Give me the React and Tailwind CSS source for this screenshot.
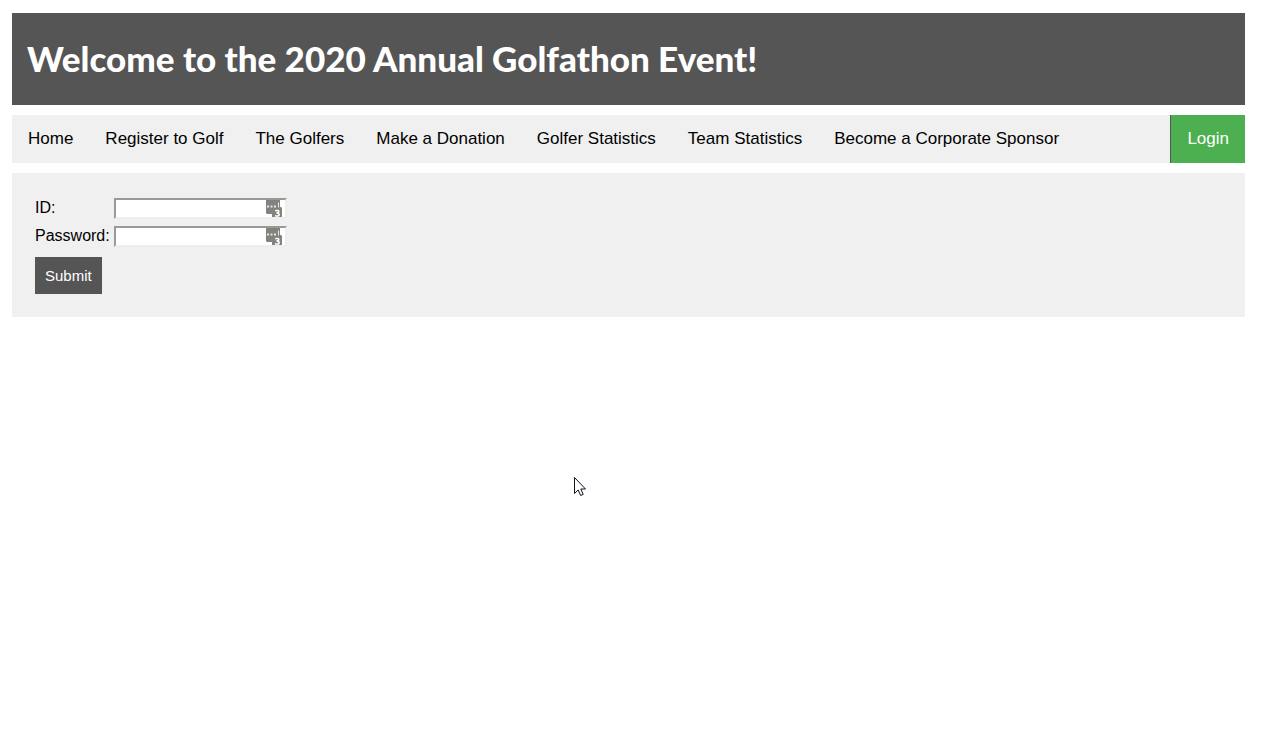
const links = [
  'Home',
  'Register to Golf',
  'The Golfers',
  'Make a Donation',
  'Golfer Statistics',
  'Team Statistics',
  'Become a Corporate Sponsor',
];

function KeyIcon() {
  return (
    <svg
      aria-hidden="true"
      viewBox="0 0 16 17"
      className="pointer-events-none absolute top-0.5 right-[5px] h-[17px] w-4"
    >
      <path d="M0 0H14V7H15L16 8V17H6V14H1L0 13Z" fill="#84827c" />
      <path
        d="M1 5.5h2v2H1zM4.5 5.5h2v2h-2zM8 5.5h2v2H8zM12 2.5h1v5H12z"
        fill="#e8e8e6"
      />
      <path
        d="M9.2 10.8Q12.8 9.8 12.8 11.6Q12.8 13 10.5 13.1Q13.2 13.2 13.2 14.8Q13 16.6 9 15.8"
        fill="none"
        stroke="#fff"
        strokeWidth="1.5"
      />
    </svg>
  );
}

function Field({ id, label, type }) {
  return (
    <>
      <label htmlFor={id} className="leading-5">
        {label}
      </label>
      <div className="relative w-[173px]">
        <input
          id={id}
          type={type}
          className="block h-[21px] w-full border-2 border-t-[#999999] border-r-[#eeeeee] border-b-[#eeeeee] border-l-[#999999] bg-white pr-5 pl-0.5 text-[13px] outline-none"
        />
        <KeyIcon />
      </div>
    </>
  );
}

export default function App() {
  return (
    <div className="flex min-h-screen flex-col gap-2.5 bg-white pt-[13px] pr-4 pl-3 font-['Liberation_Sans',Arial,sans-serif] text-base text-black">
      <header className="bg-[#555555] px-[15px] pt-[22px] pb-6">
        <h1 className="font-[Lato,sans-serif] text-[35px] leading-[46px] font-black text-white">
          Welcome to the 2020 Annual Golfathon Event!
        </h1>
      </header>

      <nav className="flex justify-between bg-[#f0f0f0] text-[17px] leading-5">
        <div className="flex flex-wrap">
          {links.map((name) => (
            <a key={name} href="#" className="px-4 py-3.5">
              {name}
            </a>
          ))}
        </div>
        <a
          href="#"
          className="border-l border-[#555555] bg-[#4caf50] px-4 py-3.5 text-white"
        >
          Login
        </a>
      </nav>

      <form
        className="bg-[#f0f0f0] px-[23px] pt-[25px] pb-[23px]"
        onSubmit={(e) => e.preventDefault()}
      >
        <div className="grid grid-cols-[75px_auto] justify-start gap-x-1 gap-y-[7px]">
          <Field id="user-id" label="ID:" type="text" />
          <Field id="password" label="Password:" type="password" />
        </div>
        <button
          type="submit"
          className="mt-2.5 block bg-[#555555] p-2.5 text-[15px] leading-[17px] text-white"
        >
          Submit
        </button>
      </form>

      <svg
        aria-hidden="true"
        viewBox="0 0 12 19"
        className="pointer-events-none absolute top-[477px] left-[574px] h-[19px] w-3"
      >
        <path
          d="M.5.5V16.5L4.2 13L6.6 18.5L9.2 17.4L6.8 12H11.5Z"
          fill="#fff"
          stroke="#15101c"
          strokeWidth="1"
        />
      </svg>
    </div>
  );
}
